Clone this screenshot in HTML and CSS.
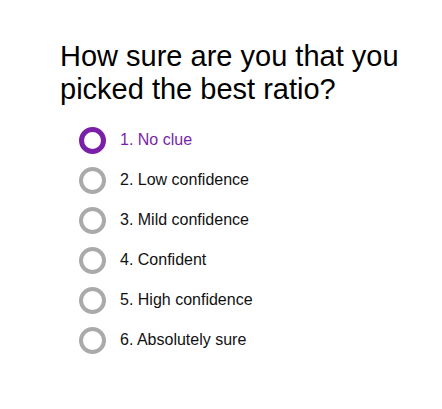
FILE: index.html
```html
<!DOCTYPE html>
<html>
<head>
<meta charset="utf-8">
<link rel="stylesheet" href="styles.css">
</head>
<body>
<div class="quiz">
  <h1 class="question">How sure are you that you picked the best ratio?</h1>
  <ul class="options">
    <li class="option selected"><span class="radio"></span><span class="label">1. No clue</span></li>
    <li class="option"><span class="radio"></span><span class="label">2. Low confidence</span></li>
    <li class="option"><span class="radio"></span><span class="label">3. Mild confidence</span></li>
    <li class="option"><span class="radio"></span><span class="label">4. Confident</span></li>
    <li class="option"><span class="radio"></span><span class="label">5. High confidence</span></li>
    <li class="option"><span class="radio"></span><span class="label">6. Absolutely sure</span></li>
  </ul>
</div>
</body>
</html>
```
FILE: styles.css
```css
html, body {
  margin: 0;
  padding: 0;
  background: #fff;
}
body {
  font-family: "Liberation Sans", Arial, sans-serif;
  color: #000;
}
.quiz {
  padding: 40px 0 0 60px;
}
.question {
  margin: 0;
  font-size: 29px;
  font-weight: normal;
  line-height: 33px;
  width: 370px;
}
.options {
  list-style: none;
  margin: 14px 0 0 0;
  padding: 0 0 0 19px;
}
.option {
  display: flex;
  align-items: center;
  height: 40px;
}
.radio {
  box-sizing: border-box;
  width: 27px;
  height: 27px;
  border-radius: 50%;
  border: 4px solid #aaa;
  flex: none;
}
.selected .radio {
  border: 5px solid #7a1fa8;
}
.label {
  margin-left: 14px;
  font-size: 16px;
  color: #111;
}
.selected .label {
  color: #7a1fa8;
}
```
